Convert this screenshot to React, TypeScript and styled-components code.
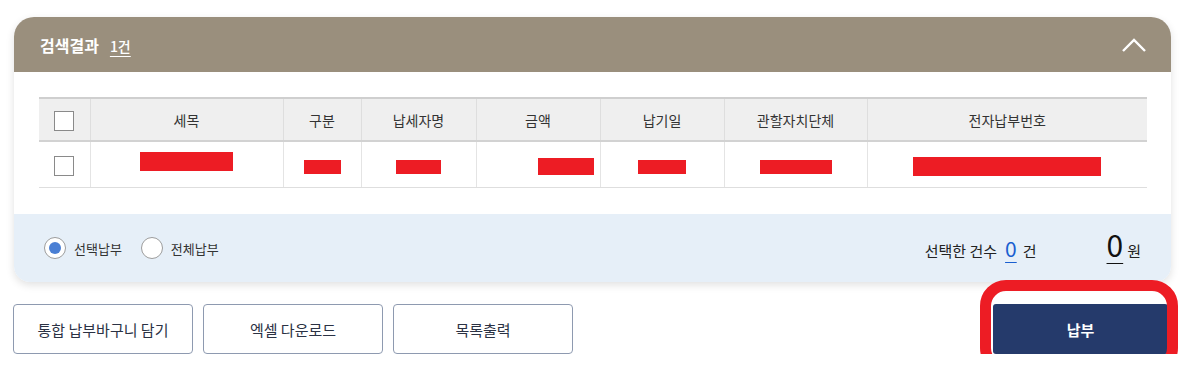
import styled, { createGlobalStyle } from "styled-components";

const GlobalStyle = createGlobalStyle`
  body {
    margin: 0;
    background: #ffffff;
    font-family: "Noto Sans CJK KR", "Noto Sans", sans-serif;
    color: #333;
  }
`;

const Page = styled.div`
  padding: 17px 11px 0 14px;
`;

const Card = styled.section`
  border-radius: 20px 20px 16px 16px;
  overflow: hidden;
  background: #fff;
  box-shadow: 0 3px 8px rgba(0, 0, 0, 0.12);
`;

const CardHeader = styled.header`
  height: 55px;
  background: #9a8f7d;
  display: flex;
  align-items: center;
  justify-content: space-between;
  padding: 0 25px 0 26px;
`;

const Title = styled.h2`
  margin: 0;
  font-size: 16px;
  font-weight: 700;
  color: #fff;
  display: flex;
  align-items: baseline;
  gap: 11px;
`;

const Count = styled.span`
  font-size: 14px;
  font-weight: 500;
  text-decoration: underline;
  text-underline-offset: 4px;
`;

const ToggleBtn = styled.button`
  border: 0;
  background: none;
  padding: 0;
  display: flex;
  cursor: pointer;
`;

const CardBody = styled.div`
  padding: 25px 24px 26px 25px;
`;

const Table = styled.table`
  width: 1108px;
  border-collapse: collapse;
  table-layout: fixed;
  border-top: 2px solid #cfcfcf;
`;

const Th = styled.th`
  height: 41px;
  padding: 0;
  line-height: 20px;
  background: #efefef;
  font-size: 14px;
  font-weight: 400;
  color: #333;
  border-bottom: 2px solid #d2d2d2;
  border-left: 1px solid #dedede;
  &:first-child {
    border-left: 0;
  }
`;

const Td = styled.td<{ $align?: string }>`
  height: 45px;
  line-height: 20px;
  text-align: ${(p) => p.$align || "center"};
  padding: ${(p) => (p.$align === "right" ? "0 6px 0 0" : "0")};
  border-bottom: 1px solid #dedede;
  border-left: 1px solid #e4e4e4;
  &:first-child {
    border-left: 0;
  }
`;

const Check = styled.span`
  display: inline-block;
  width: 18px;
  height: 18px;
  border: 1px solid #8a8a8a;
  background: #fff;
  vertical-align: middle;
`;

const Redact = styled.span<{ $w: number; $h: number; $up?: number }>`
  display: inline-block;
  width: ${(p) => p.$w}px;
  height: ${(p) => p.$h}px;
  background: #ed1c24;
  vertical-align: middle;
  margin-bottom: ${(p) => p.$up || 0}px;
`;

const Footer = styled.div`
  height: 68px;
  background: #e6eff8;
  display: flex;
  align-items: center;
  justify-content: space-between;
  padding: 0 30px 0 30px;
`;

const RadioGroup = styled.div`
  display: flex;
  align-items: center;
  gap: 19px;
`;

const RadioLabel = styled.label`
  display: flex;
  align-items: center;
  gap: 8px;
  font-size: 13px;
  color: #333;
`;

const RadioDot = styled.span<{ $on?: boolean }>`
  width: 20px;
  height: 20px;
  border-radius: 50%;
  border: 1px solid #9c9c9c;
  background: #fff;
  display: flex;
  align-items: center;
  justify-content: center;
  &::after {
    content: "";
    width: 12px;
    height: 12px;
    border-radius: 50%;
    background: ${(p) => (p.$on ? "#4a7fd4" : "transparent")};
  }
`;

const Summary = styled.div`
  display: flex;
  align-items: baseline;
  font-size: 15px;
  color: #222;
  margin-bottom: 6px;
`;

const Num = styled.span<{ $big?: boolean }>`
  font-size: ${(p) => (p.$big ? "30px" : "21px")};
  color: ${(p) => (p.$big ? "#111" : "#1a5fd0")};
  text-decoration: underline;
  text-underline-offset: ${(p) => (p.$big ? "6px" : "5px")};
  text-decoration-thickness: 1px;
  margin: ${(p) => (p.$big ? "0 4px 0 70px" : "0 6px 0 8px")};
  line-height: 1;
`;

const Actions = styled.div`
  display: flex;
  align-items: center;
  margin-top: 22px;
  gap: 10px;
  margin-left: -1px;
`;

const OutlineBtn = styled.button`
  width: 180px;
  height: 50px;
  border: 1px solid #8e9ab0;
  border-radius: 4px;
  background: #fff;
  font-family: inherit;
  font-size: 15px;
  color: #2b3244;
`;

const PayBtn = styled.button`
  position: relative;
  margin-left: auto;
  margin-right: 3px;
  width: 175px;
  height: 50px;
  border: 0;
  border-radius: 3px;
  background: #253a6b;
  color: #fff;
  font-family: inherit;
  font-size: 15px;
  font-weight: 700;
  &::after {
    content: "";
    position: absolute;
    left: -13px;
    top: -24px;
    right: -10px;
    bottom: -20px;
    border: 11px solid #ed1c24;
    border-radius: 26px;
    pointer-events: none;
  }
`;

const columns = ["세목", "구분", "납세자명", "금액", "납기일", "관할자치단체", "전자납부번호"];
const widths = [51, 193, 78, 115, 124, 124, 143, 280];

export default function App() {
  return (
    <Page>
      <GlobalStyle />
      <Card>
        <CardHeader>
          <Title>
            검색결과 <Count>1건</Count>
          </Title>
          <ToggleBtn aria-label="접기">
            <svg width="24" height="14" viewBox="0 0 24 14">
              <path d="M1 13 L12 2 L23 13" fill="none" stroke="#fff" strokeWidth="2.4" />
            </svg>
          </ToggleBtn>
        </CardHeader>
        <CardBody>
          <Table>
            <colgroup>
              {widths.map((w, i) => (
                <col key={i} style={{ width: w }} />
              ))}
            </colgroup>
            <thead>
              <tr>
                <Th>
                  <Check />
                </Th>
                {columns.map((c) => (
                  <Th key={c}>{c}</Th>
                ))}
              </tr>
            </thead>
            <tbody>
              <tr>
                <Td>
                  <Check />
                </Td>
                <Td>
                  <Redact $w={93} $h={19} $up={7} />
                </Td>
                <Td>
                  <Redact $w={37} $h={14} />
                </Td>
                <Td>
                  <Redact $w={45} $h={14} />
                </Td>
                <Td $align="right">
                  <Redact $w={56} $h={17} />
                </Td>
                <Td>
                  <Redact $w={48} $h={14} />
                </Td>
                <Td>
                  <Redact $w={72} $h={14} />
                </Td>
                <Td>
                  <Redact $w={188} $h={19} />
                </Td>
              </tr>
            </tbody>
          </Table>
        </CardBody>
        <Footer>
          <RadioGroup>
            <RadioLabel>
              <RadioDot $on /> 선택납부
            </RadioLabel>
            <RadioLabel>
              <RadioDot /> 전체납부
            </RadioLabel>
          </RadioGroup>
          <Summary>
            선택한 건수 <Num>0</Num>건<Num $big>0</Num>원
          </Summary>
        </Footer>
      </Card>
      <Actions>
        <OutlineBtn>통합 납부바구니 담기</OutlineBtn>
        <OutlineBtn>엑셀 다운로드</OutlineBtn>
        <OutlineBtn>목록출력</OutlineBtn>
        <PayBtn>납부</PayBtn>
      </Actions>
    </Page>
  );
}
